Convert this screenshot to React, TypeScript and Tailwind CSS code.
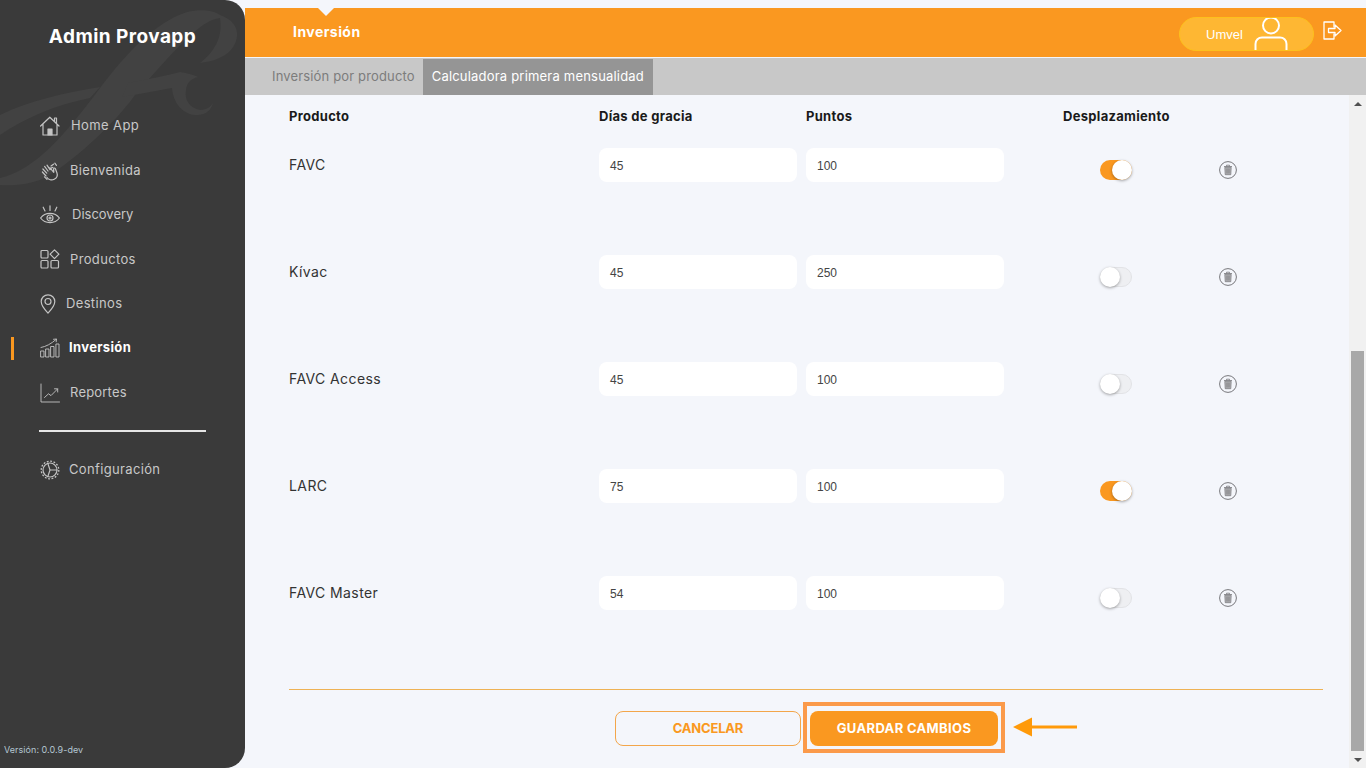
import React from "react";

const S = { fill: "none", stroke: "currentColor", strokeWidth: 1.2, strokeLinecap: "round", strokeLinejoin: "round" } as const;

const HomeIcon = () => (
  <svg width="20" height="20" viewBox="0 0 20 20" {...S}>
    <path d="M.6 10 9.800 1.200l9.200 8.800M3 8.200V19h14V8.200M14.500 5.500V2h2v5.400" />
    <path d="M8 19v-6h4v6z" fill="currentColor" />
  </svg>
);
const HandIcon = () => (
  <svg width="20" height="20" viewBox="0 0 20 20" {...S}>
    <path d="M6 15 2.400 11M6.700 12.200 2.900 8M8 10 4.600 5.400M10 8.700 7 4.200M10.300 8.500c.5-1.500 1.300-2 2.600-2.200M11 5l2.500-1.800M14.800 2.200l1.700 2.200" />
    <path d="M7 16.500c1.300 2.200 4.700 3.100 7.200 1.800 2.600-1.400 3.600-4 2.700-6.600l-1.600-4.200c-.5-.8-1.600-.6-1.700.5l.2 3.300-4-4.600" />
    <path d="M4.500 15.800 7 18.400" />
  </svg>
);
const EyeIcon = () => (
  <svg width="20" height="20" viewBox="0 0 20 20" {...S}>
    <path d="M.6 13c2.200-3 5.400-4.600 9.400-4.600s7.200 1.600 9.400 4.600c-2.200 3-5.400 4.600-9.400 4.600S2.800 16 .6 13z" />
    <circle cx="10" cy="13" r="3" />
    <circle cx="10" cy="13" r="1" />
    <path d="M10 .8v4.700M3.200 2.200l1.800 3.800M16.800 2.200 15 6" />
  </svg>
);
const GridIcon = () => (
  <svg width="20" height="20" viewBox="0 0 20 20" {...S}>
    <rect x="1" y="1.500" width="7" height="7.500" rx="1" />
    <path d="m14.500.8 4.400 4.400-4.400 4.400-4.400-4.400z" />
    <rect x="1" y="11.500" width="7" height="7.500" rx="1" />
    <rect x="11" y="11.500" width="7.500" height="7.500" rx="1" />
  </svg>
);
const PinIcon = () => (
  <svg width="16" height="20" viewBox="0 0 16 20" {...S}>
    <path d="M8 19.200C4 15 1.200 11.500 1.200 7.600a6.800 6.800 0 0 1 13.600 0c0 3.900-2.800 7.400-6.800 11.600z" />
    <circle cx="8" cy="7.500" r="3" />
  </svg>
);
const ChartBarsIcon = () => (
  <svg width="20" height="20" viewBox="0 0 20 20" {...S} strokeWidth={0.9}>
    <path d="M1 13h3v6H1zM6 11h3v8H6zM11 8.500h3V19h-3zM16.300 6h2.700v13h-2.700z" />
    <path d="M1 9.500C6 8.500 11 6 16 1.500M13.500 1.300 16.500 1l-.3 2.800" />
  </svg>
);
const LineChartIcon = () => (
  <svg width="20" height="20" viewBox="0 0 20 20" {...S} strokeWidth={0.9}>
    <path d="M1 1v18h18.500" />
    <path d="m4.500 14.500 4-3.700 2.500 1.800 6.500-6.600M14.500 5.800h3.200V9" />
  </svg>
);
const GearIcon = () => (
  <svg width="20" height="20" viewBox="0 0 20 20" {...S}>
    <circle cx="10" cy="10" r="7" />
    <circle cx="10" cy="10" r="8.800" strokeDasharray="1.800 1.650" strokeWidth={1.300} strokeLinecap="butt" />
    <path d="M7.800 3.400 10 10l-2.200 6.600M10 10h6.800" />
  </svg>
);
const Trash = () => (
  <svg width="18" height="18" viewBox="0 0 18 18" fill="none" className="text-[#77777b]">
    <circle cx="9" cy="9" r="8.400" stroke="currentColor" strokeWidth="1" />
    <path d="M5 5.500h8M7.500 5.300V4.200h3v1.100" stroke="currentColor" strokeWidth="0.800" />
    <path d="M5.800 6.300h6.400l-.4 7.400H6.200z" fill="#b0b0b3" stroke="currentColor" strokeWidth="0.700" />
    <path d="M7.800 7.500v5M9 7.500v5M10.200 7.500v5" stroke="#77777b" strokeWidth="0.600" />
  </svg>
);

const nav = [
  { label: "Home App", icon: <HomeIcon />, gap: "ml-[11px] tracking-[0.4px]" },
  { label: "Bienvenida", icon: <HandIcon />, gap: "ml-[10px] tracking-[0.35px]" },
  { label: "Discovery", icon: <EyeIcon />, gap: "ml-[12px] tracking-[0px]" },
  { label: "Productos", icon: <GridIcon />, gap: "ml-[10px] tracking-[0.35px]" },
  { label: "Destinos", icon: <PinIcon />, gap: "ml-[10px] tracking-[0.35px]" },
  { label: "Inversión", icon: <ChartBarsIcon />, gap: "ml-[9px] tracking-[0.35px]", active: true },
  { label: "Reportes", icon: <LineChartIcon />, gap: "ml-[10px] tracking-[0.2px]" },
];

const rows = [
  { name: "FAVC", dias: "45", puntos: "100", on: true },
  { name: "Kívac", dias: "45", puntos: "250", on: false },
  { name: "FAVC Access", dias: "45", puntos: "100", on: false },
  { name: "LARC", dias: "75", puntos: "100", on: true },
  { name: "FAVC Master", dias: "54", puntos: "100", on: false },
];

function Toggle({ on }: { on: boolean }) {
  return (
    <div className={`relative w-[32px] h-[20px] rounded-full ${on ? "bg-[#fa9820]" : "bg-[#eeeff2] border border-[#e2e3e6]"}`}>
      <div className={`absolute w-[20px] h-[20px] rounded-full bg-white shadow-[0_1px_3px_rgba(0,0,0,0.35)] ${on ? "right-0 top-0" : "-left-px -top-px"}`} />
    </div>
  );
}

function Field({ value, className }: { value: string; className: string }) {
  return (
    <div className={`w-[198px] h-[34px] bg-white rounded-[8px] flex items-center pl-[11px] pt-px text-[12px] text-[#444] font-['Liberation_Sans',sans-serif] ${className}`}>
      {value}
    </div>
  );
}

export default function App() {
  return (
    <div className="flex h-[768px] w-[1366px] overflow-hidden bg-[#f4f6fb] font-['Inter','Liberation_Sans',sans-serif]">
      <aside className="relative w-[245px] h-full shrink-0 bg-[#3a3a3a] rounded-r-[20px] overflow-hidden flex flex-col">
        <svg className="absolute left-0 top-0" width="245" height="200" viewBox="0 0 245 200" fill="#424242">
          <path d="M0 178C35 170 65 135 100 88 125 55 155 22 187 12 200 9 213 10 220 15 232 19 238 27 237 36 236 48 226 60 200 63 214 52 223 38 220 18 200 20 175 50 135 95 110 130 60 172 40 180 25 185 10 186 0 185Z" />
          <path d="M0 115C30 100 65 93 100 87L90 98C55 105 25 118 0 135Z" />
          <path d="M128 83C150 79 168 75 180 72 188 73 194 75 198 77 190 79 187 83 186 90 184 100 190 108 200 110 207 110 212 106 213 102 212 110 205 116 195 115 182 114 173 102 172 88 160 90 145 93 122 97Z" />
        </svg>

        <h1 className="relative mt-[25px] h-[24px] text-center text-[19px] leading-[24px] font-bold tracking-[0.45px] text-white">Admin Provapp</h1>

        <nav className="relative mt-[55px] flex flex-col">
          {nav.map((n) => (
            <div key={n.label} className="relative h-[44.4px] flex items-center pl-[40px] text-[#c8c8c8]">
              {n.active && <span className="absolute left-[11px] top-[11px] w-[3px] h-[23px] bg-[#fa9820]" />}
              <span className="text-[#c4c4c4] flex">{n.icon}</span>
              <span className={`${n.gap} text-[13px] ${n.active ? "font-bold text-white" : ""}`}>{n.label}</span>
            </div>
          ))}
        </nav>

        <div className="relative ml-[39px] mt-[15px] w-[167px] h-[2px] bg-[#e6e6e6]" />

        <div className="relative mt-[16px] h-[44.4px] flex items-center pl-[40px] text-[#c8c8c8]">
          <span className="text-[#c4c4c4] flex"><GearIcon /></span>
          <span className="ml-[9px] text-[13px] tracking-[0.35px]">Configuración</span>
        </div>

        <div className="relative mt-auto mb-[12px] pl-[4px] text-[9px] tracking-[0.05px] text-[#b4c6d2]">Versión: 0.0.9-dev</div>
      </aside>

      <main className="flex-1 min-w-0 flex flex-col pt-[8px]">
        <header className="relative h-[49px] shrink-0 bg-[#fa9820] flex items-center pl-[48px] pr-[24px]">
          <span className="absolute left-[73px] top-0 w-0 h-0 border-x-[8px] border-x-transparent border-t-[8px] border-t-[#f4f6fb]" />
          <span className="mb-[2px] text-[14px] font-bold tracking-[0.45px] text-white">Inversión</span>
          <div className="ml-auto flex items-center gap-[9px]">
            <div className="w-[135px] h-[34px] mt-[2px] rounded-full bg-[#feb733] border border-[#fdc01d] flex items-center overflow-hidden pl-[26px]">
              <span className="mt-[2px] text-[13px] text-white font-['Liberation_Sans',sans-serif]">Umvel</span>
              <svg className="ml-[11px] self-end" width="34" height="33" viewBox="0 1 34 33" fill="none" stroke="white" strokeWidth="2">
                <circle cx="17" cy="9.500" r="8" />
                <path d="M1.500 34v-6c0-4 3-6.500 6.500-6.500h18c3.500 0 6.500 2.500 6.500 6.500v6" />
              </svg>
            </div>
            <svg className="mb-[4px]" width="19" height="19" viewBox="0 0 19 19" fill="none" stroke="white" strokeWidth="1.300" strokeLinejoin="round" strokeLinecap="round">
              <path d="M11 6V1H1v17h10v-5" />
              <path d="M5.500 7.500h6.500V4l6 5.500-6 5.500v-3.500H5.500z" />
            </svg>
          </div>
        </header>

        <div className="mt-px h-[37px] shrink-0 bg-[#c8c8c8] flex pl-[27px] text-[13px] tracking-[0.2px]">
          <div className="flex items-center pr-[8px] tracking-[0.15px] text-[#7c7c7c]">Inversión por producto</div>
          <div className="mt-px flex items-center px-[9px] bg-[#959595] text-white">Calculadora primera mensualidad</div>
        </div>

        <div className="flex-1 min-h-0 flex">
          <section className="flex-1 min-w-0 pl-[44px] pr-[26px] flex flex-col">
            <div className="flex h-[43px] items-center text-[13px] font-bold tracking-[0.3px] text-[#1a1a1a] shrink-0">
              <span className="w-[310px]">Producto</span>
              <span className="w-[207px]">Días de gracia</span>
              <span className="w-[257px]">Puntos</span>
              <span>Desplazamiento</span>
            </div>
            <div className="flex flex-col">
              {rows.map((r) => (
                <div key={r.name} className="h-[107px] pt-[10px] flex items-start shrink-0">
                  <span className="w-[310px] pt-[6px] text-[14px] tracking-[0.4px] text-[#333]">{r.name}</span>
                  <Field value={r.dias} className="mr-[9px]" />
                  <Field value={r.puntos} className="" />
                  <div className="ml-[96px] pt-[12px]"><Toggle on={r.on} /></div>
                  <div className="ml-[87px] pt-[13px]"><Trash /></div>
                </div>
              ))}
            </div>
            <div className="mt-[16px] h-px bg-[#eeb254] shrink-0" />
            <div className="relative mt-[21px] flex pl-[326px] gap-[9px]">
              <button className="w-[186px] h-[35px] pt-px rounded-[8px] border border-[#f3a64a] text-[13px] tracking-[-0.2px] font-bold text-[#fa9820]">CANCELAR</button>
              <button className="relative w-[188px] h-[35px] pt-px rounded-[8px] bg-[#fa9820] text-[13px] tracking-[0.35px] font-bold text-white">
                GUARDAR CAMBIOS
                <span className="absolute -left-[7px] -top-[9px] w-[202px] h-[51px] border-[4px] border-[#fb9a4a]" />
              </button>
              <svg className="absolute left-[724px] top-[5px]" width="64" height="22" viewBox="0 0 64 22">
                <path d="M0 11 19 1.500V9.500h45v3H19V20.500z" fill="#ff9a0a" />
              </svg>
            </div>
          </section>

          <div className="w-[17px] shrink-0 bg-[#f1f1f1] flex flex-col items-center">
            <div className="h-[17px] flex items-center justify-center shrink-0">
              <span className="w-0 h-0 border-x-[4px] border-x-transparent border-b-[4px] border-b-[#505050]" />
            </div>
            <div className="mt-[239px] w-[13px] h-[400px] bg-[#a8a8a8] shrink-0" />
            <div className="h-[17px] flex items-center justify-center shrink-0">
              <span className="w-0 h-0 border-x-[4px] border-x-transparent border-t-[4px] border-t-[#505050]" />
            </div>
          </div>
        </div>
      </main>
    </div>
  );
}
